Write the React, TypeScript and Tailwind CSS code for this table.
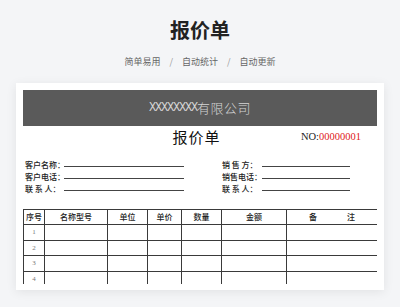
import React from 'react';

const CJK = '"Liberation Serif","Noto Sans CJK SC",serif';
const SANS = '"Noto Sans CJK SC","Liberation Sans",sans-serif';

const infoRows = [
  { left: '客户名称：', right: '销 售 方：' },
  { left: '客户电话：', right: '销售电话：' },
  { left: '联 系 人：', right: '联 系 人：' },
];

const columns = ['序号', '名称型号', '单位', '单价', '数量', '金额', ''];

const App: React.FC = () => {
  return (
    <div className="w-[400px] h-[307px] bg-[#f4f5f7] overflow-hidden flex flex-col items-center" style={{ fontFamily: SANS }}>
      <h1 className="mt-[18px] text-[20px] leading-[24px] font-bold text-[#222]">报价单</h1>
      <div className="mt-[14px] flex items-center gap-[9px] text-[9px] leading-[12px] text-[#666]">
        <span>简单易用</span>
        <span className="text-[#999]">/</span>
        <span>自动统计</span>
        <span className="text-[#999]">/</span>
        <span>自动更新</span>
      </div>

      <div className="mt-[15px] w-[368px] bg-white shadow-[0_2px_10px_rgba(0,0,0,0.08)] px-[7px] pt-[7px] pb-[6px]" style={{ fontFamily: CJK }}>
        <div className="h-[36px] bg-[#5a5a5a] flex items-center justify-center text-[#d4d4d4]">
          <span className="text-[12px] tracking-[-1.2px]" style={{ fontFamily: '"Liberation Mono",monospace' }}>XXXXXXXX</span>
          <span className="text-[13px] tracking-[0.5px]" style={{ fontFamily: SANS, fontWeight: 300 }}>有限公司</span>
        </div>

        <div className="h-[22px] grid grid-cols-[1fr_auto_1fr] items-center">
          <div />
          <div className="mr-[7px] text-[15px] leading-[20px] tracking-[1px] text-[#111]" style={{ fontFamily: SANS }}>报价单</div>
          <div className="flex justify-end pr-[16px] text-[10.5px] text-[#222]">
            <span>NO:</span>
            <span className="text-[#e02020]">00000001</span>
          </div>
        </div>

        <div className="mt-[11px] flex flex-col">
          {infoRows.map((r, i) => (
            <div key={i} className="h-[12px] flex items-start pl-[2px] text-[8px] leading-[12px] font-medium text-[#222]" style={{ fontFamily: SANS }}>
              <div className="w-[197px] flex">
                <span className="w-[39px] whitespace-pre">{r.left}</span>
                <div className="w-[120px] h-[8px] border-b border-[#444]" />
              </div>
              <span className="w-[40px] whitespace-pre">{r.right}</span>
              <div className="w-[88px] h-[8px] border-b border-[#444]" />
            </div>
          ))}
        </div>

        <div className="mt-[14px] h-[75px] overflow-hidden">
          <div className="grid grid-cols-[21px_63px_40px_34px_40px_65px_91px] border-l border-t border-[#3a3a3a] text-[8px] text-[#222]" style={{ fontFamily: SANS }}>
            {columns.map((c, i) => (
              <div key={i} className="h-[15px] border-r border-b border-[#3a3a3a] flex items-center justify-center font-medium">
                {i === 6 ? (
                  <div className="w-full flex justify-between px-[22px]">
                    <span>备</span>
                    <span>注</span>
                  </div>
                ) : c}
              </div>
            ))}
            {[1, 2, 3, 4].map(n =>
              columns.map((_, i) => (
                <div key={`${n}-${i}`} className="h-[15.5px] border-r border-b border-[#3a3a3a] flex items-center justify-center text-[7px] text-[#777]" style={{ fontFamily: '"Liberation Serif",serif' }}>
                  {i === 0 ? n : ''}
                </div>
              ))
            )}
          </div>
        </div>
      </div>
    </div>
  );
};

export default App;
